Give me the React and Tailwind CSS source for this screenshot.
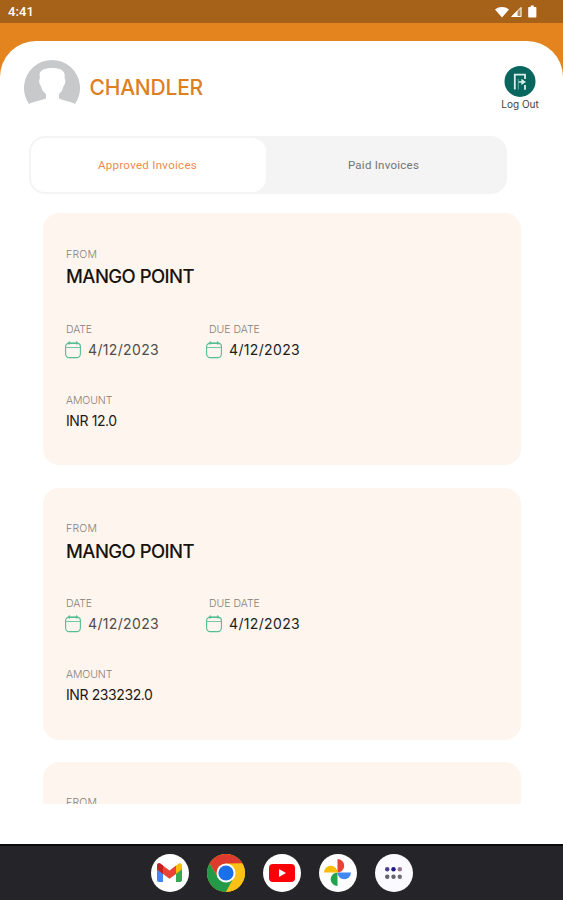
function CalendarIcon() {
  return (
    <svg className="block h-[18px] w-4 shrink-0" viewBox="0 0 16 18" fill="none" stroke="#55bd92" strokeWidth="1.1" strokeLinecap="round">
      <path d="M3.6 2.4h8.8A3 3 0 0 1 15.4 5.4v7.6a3.6 3.6 0 0 1-3.6 3.6H4.2A3.6 3.6 0 0 1 .6 13V5.4a3 3 0 0 1 3-3Z" />
      <path d="M1 6.5h14" strokeWidth=".8" />
      <path d="M4.3 1v1.9M11.7 1v1.9M3.2 2.3h9.6" strokeWidth="1.4" />
    </svg>
  );
}

function Label({ children, className = "" }) {
  return <div className={`h-3 whitespace-nowrap text-[10.5px] leading-3 font-light text-[#85807b] ${className}`}>{children}</div>;
}

function InvoiceCard({ amount }) {
  return (
    <article className="h-[252px] w-[478px] shrink-0 rounded-2xl bg-[#fef5ee] pt-[35.5px] pl-[23px]">
      <Label className="tracking-[0.2px]">FROM</Label>
      <h2 className="mt-[3.5px] h-6 whitespace-nowrap text-[18.5px] leading-6 font-medium tracking-[-0.55px] text-[#17130f]">MANGO POINT</h2>
      <div className="mt-[35.5px] flex">
        <div className="-ml-px w-[141px]">
          <Label className="ml-px tracking-[-0.1px]">DATE</Label>
          <div className="mt-[5px] flex h-[18px] items-center">
            <CalendarIcon />
            <span className="ml-[7px] whitespace-nowrap text-[14px] leading-[18px] tracking-[0.35px] text-[#514c48]">4/12/2023</span>
          </div>
        </div>
        <div>
          <Label className="ml-[3px]">DUE DATE</Label>
          <div className="mt-[5px] flex h-[18px] items-center">
            <CalendarIcon />
            <span className="ml-[7px] whitespace-nowrap text-[14px] leading-[18px] tracking-[0.35px] text-[#211d1a]">4/12/2023</span>
          </div>
        </div>
      </div>
      <Label className="mt-9 tracking-[-0.1px]">AMOUNT</Label>
      <div className="mt-[5px] h-[18px] whitespace-nowrap text-[14px] leading-[18px] tracking-[-0.4px] text-[#1e1a17]">INR {amount}</div>
    </article>
  );
}

function StatusBar() {
  return (
    <div className="flex h-[23px] items-center justify-between bg-[#a66218] pr-[25px] pl-2 text-white">
      <span className="font-['Roboto',sans-serif] text-[13px] leading-[23px] font-medium tracking-[0.1px]">4:41</span>
      <svg className="block h-[14px] w-[43px]" viewBox="0 0 43 14">
        <path d="M0 4.5C4 1.2 10 1.2 14 4.5L7 12.5Z" fill="#fff" />
        <path d="M16 12 26.5 1.5V12Z" fill="#fff" fillOpacity=".25" />
        <path d="M16 12 22.5 5.5V12Z" fill="#fff" />
        <path d="M17 11.5H26V2.5Z" fill="none" stroke="#fff" />
        <path d="M34 2h1.8V.5h3V2h1.8q.8 0 .8.8v8.8q0 .9-.9.9h-6.4q-.9 0-.9-.9V2.8q0-.8.8-.8Z" fill="#fff" />
      </svg>
    </div>
  );
}

function Avatar() {
  return (
    <svg className="block h-14 w-14" viewBox="0 0 56 56">
      <path d="M5 44A28 28 0 1 1 51 44C46 41.5 38 40 35 38.5V34C38 31 39 29 39.5 26C41.5 24 42 20 40.5 18C42 11 37 8 28 8C19 8 14 11 16 18C14.5 20 15 24 17 26C17.5 29 19 32 22 34V38.5C18 40 10 41.5 5 44Z" fill="#c8c9ca" />
    </svg>
  );
}

function LogoutIcon() {
  return (
    <svg className="block h-8 w-8" viewBox="0 0 32 32">
      <circle cx="16" cy="16.4" r="15.5" fill="#08665f" />
      <g fill="none" stroke="#d9eeeb">
        <path d="M10.8 24.5V9.7H21V14" strokeWidth="1.8" />
        <path d="M14.3 24.5V13.9" strokeWidth="1" opacity=".5" />
        <path d="M21 20V24.8" strokeWidth="1.8" />
        <path d="M14.8 16.9h5" strokeWidth="1.5" />
      </g>
      <path d="m17.4 13.7 4.6 3.2-4.6 3.2Z" fill="#d9eeeb" />
    </svg>
  );
}

function Disc({ children, tone = "bg-white" }) {
  return <div className={`flex h-[38px] w-[38px] items-center justify-center rounded-full ${tone}`}>{children}</div>;
}

function Dock() {
  return (
    <nav className="flex h-14 items-center justify-center gap-[18px] border-t-2 border-[#09090b] bg-[#252529] pb-px">
      <Disc>
        <svg className="block h-[19px] w-[25px]" viewBox="0 0 25 19">
          <path d="M0 3v14q0 2 2 2h4V8Z" fill="#4285f4" />
          <path d="M25 3v14q0 2-2 2h-4V8Z" fill="#34a853" />
          <path d="M19 2.5 22 .4q3-1 3 2.8v3L19 11Z" fill="#fbbc04" />
          <path d="M0 3.2Q0-.8 3.2.5L12.5 7.4 19 2.5V11l-6.5 4.8L6 11 0 6.3Z" fill="#ea4335" />
          <path d="M0 3.2Q0-.8 3.2.5L6 2.6V11L0 6.3Z" fill="#c5221f" />
        </svg>
      </Disc>
      <Disc tone="bg-transparent">
        <svg className="block h-[38px] w-[38px]" viewBox="0 0 38 38">
          <circle cx="19" cy="19" r="19" fill="#fbc116" />
          <path d="M2.55 9.5A19 19 0 0 1 35.45 9.5L19 10 11 23.5Z" fill="#dc3b2d" />
          <path d="M2.55 9.5A19 19 0 0 0 19 38L27 23.5 11 23.5Z" fill="#239a48" />
          <path d="M35.45 9.5H19L27 23.5 19 38A19 19 0 0 0 35.45 9.5Z" fill="#fbc116" />
          <circle cx="19" cy="19" r="9.5" fill="#fff" />
          <circle cx="19" cy="19" r="7.6" fill="#1a70e8" />
        </svg>
      </Disc>
      <Disc>
        <svg className="block h-[18px] w-[26px]" viewBox="0 0 26 18">
          <rect width="26" height="18" rx="4" fill="#fb0007" />
          <path d="m10 5 7 4-7 4Z" fill="#fff" />
        </svg>
      </Disc>
      <Disc>
        <svg className="block h-[27px] w-[27px]" viewBox="0 0 28 28">
          <path d="M14 0a7 7 0 0 1 0 14Z" fill="#ea4335" />
          <path d="M28 14a7 7 0 0 1-14 0Z" fill="#4285f4" />
          <path d="M14 28a7 7 0 0 1 0-14Z" fill="#23a34a" />
          <path d="M0 14a7 7 0 0 1 14 0Z" fill="#fbbc04" />
        </svg>
      </Disc>
      <Disc tone="bg-[#fbfaff]">
        <svg className="block h-3 w-[17px]" viewBox="0 0 17 12">
          <circle cx="2.2" cy="2.3" r="2.2" fill="#4b408b" />
          <circle cx="8.5" cy="2.3" r="2.2" fill="#20178b" />
          <circle cx="14.8" cy="2.3" r="2.2" fill="#94748f" />
          <circle cx="2.2" cy="9.7" r="2.2" fill="#65626f" />
          <circle cx="8.5" cy="9.7" r="2.2" fill="#65626f" />
          <circle cx="14.8" cy="9.7" r="2.2" fill="#706d78" />
        </svg>
      </Disc>
    </nav>
  );
}

export default function App() {
  return (
    <div className="flex h-[900px] w-[563px] flex-col overflow-hidden bg-[#e3841f] font-['Inter',sans-serif]">
      <StatusBar />
      <main className="mt-[18px] flex h-[803px] flex-col rounded-t-[36px] bg-white">
        <header className="flex h-[95px] items-start justify-between pr-[23px] pl-6">
          <div className="flex pt-[19px]">
            <Avatar />
            <h1 className="ml-[9.5px] h-[55px] text-[21px] leading-[55px] font-medium tracking-[-0.2px] text-[#dc8022]">CHANDLER</h1>
          </div>
          <button className="flex w-10 flex-col items-center pt-6">
            <LogoutIcon />
            <span className="mt-px h-3 whitespace-nowrap text-[10px] leading-3 text-[#424242]">Log Out</span>
          </button>
        </header>
        <div className="ml-[29px] flex h-[58px] w-[478px] shrink-0 rounded-2xl bg-[#f4f4f4] p-0.5 font-['Roboto',sans-serif] text-[11.5px]">
          <button className="h-[54px] w-[235px] rounded-[14px] bg-white pt-0.5 pr-0.5 tracking-[0.3px] text-[#ee8a4c]">Approved Invoices</button>
          <button className="h-[54px] w-[235px] pt-0.5 tracking-[0.25px] text-[#737373]">Paid Invoices</button>
        </div>
        <section className="mt-[19px] ml-[43px] flex h-[591px] flex-col gap-[22.5px] overflow-hidden">
          <InvoiceCard amount="12.0" />
          <InvoiceCard amount="233232.0" />
          <article className="h-[42px] w-[478px] shrink-0 overflow-hidden rounded-t-2xl bg-[#fef5ee] pt-[35px] pl-[23px]">
            <Label className="tracking-[0.2px]">FROM</Label>
          </article>
        </section>
      </main>
      <Dock />
    </div>
  );
}
